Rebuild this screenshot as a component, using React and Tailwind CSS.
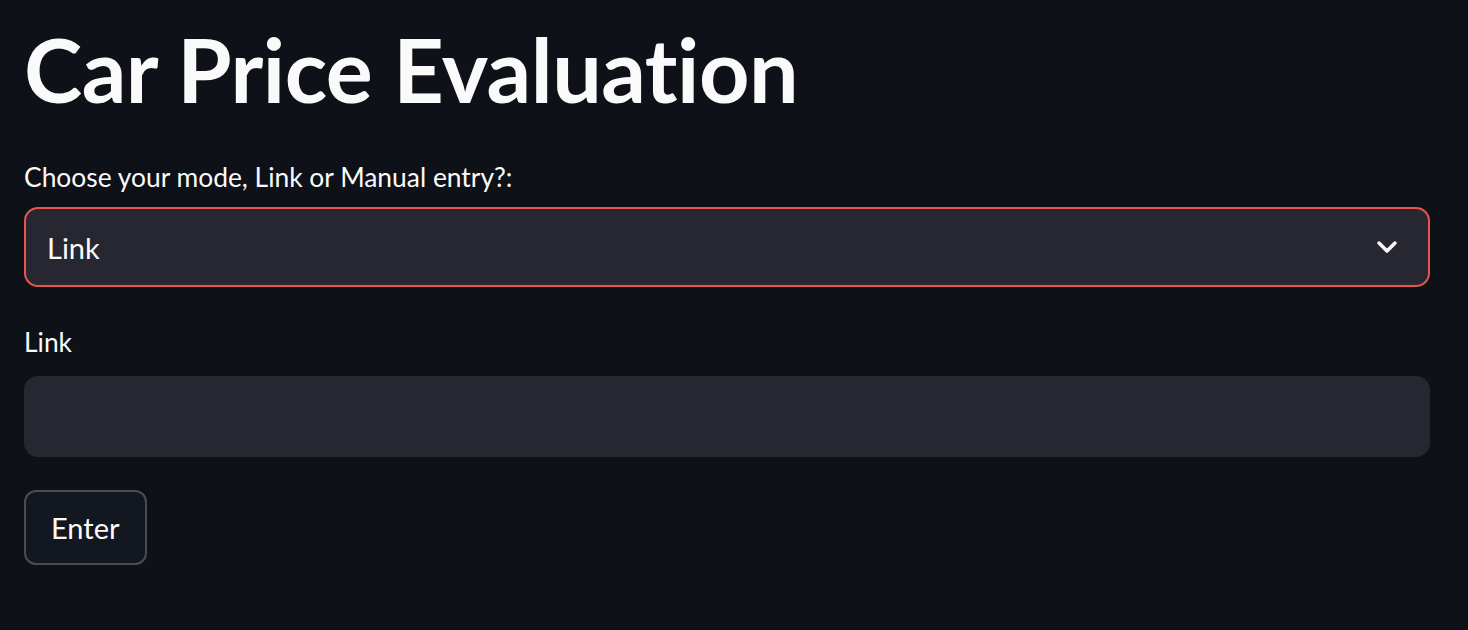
export default function App() {
  return (
    <div className="min-h-[630px] w-full bg-[#0e1117] text-[#fafafa] font-['Lato','Noto_Sans',sans-serif]">
      <div className="px-[24px] pt-[21px] pr-[38px]">
        <h1 className="text-[88px] font-bold leading-[1.1] tracking-[-0.5px]">Car Price Evaluation</h1>

        <div className="mt-[44px]">
          <label className="block text-[26.4px] leading-[1.2]">Choose your mode, Link or Manual entry?:</label>
          <div className="mt-[14px] flex h-[80px] items-center justify-between rounded-[14px] border-2 border-[#ea5450] bg-[#262730] pl-[21px] pr-[30px]">
            <span className="text-[29px]">Link</span>
            <svg width="22" height="14" viewBox="0 0 22 14" fill="none">
              <path d="M3 3l8 8 8-8" stroke="#fafafa" strokeWidth="3.5" strokeLinecap="round" strokeLinejoin="round" />
            </svg>
          </div>
        </div>

        <div className="mt-[40px]">
          <label className="block text-[26.4px] leading-[1.2]">Link</label>
          <input
            type="text"
            className="mt-[17px] block h-[81px] w-full rounded-[14px] bg-[#262730] px-[21px] text-[29px] text-[#fafafa] outline-none"
          />
        </div>

        <button className="mt-[33px] h-[75px] rounded-[12px] border-2 border-[#4a4c54] bg-[#131720] px-[25px] text-[29px] text-[#fafafa]">
          Enter
        </button>
      </div>
    </div>
  );
}
